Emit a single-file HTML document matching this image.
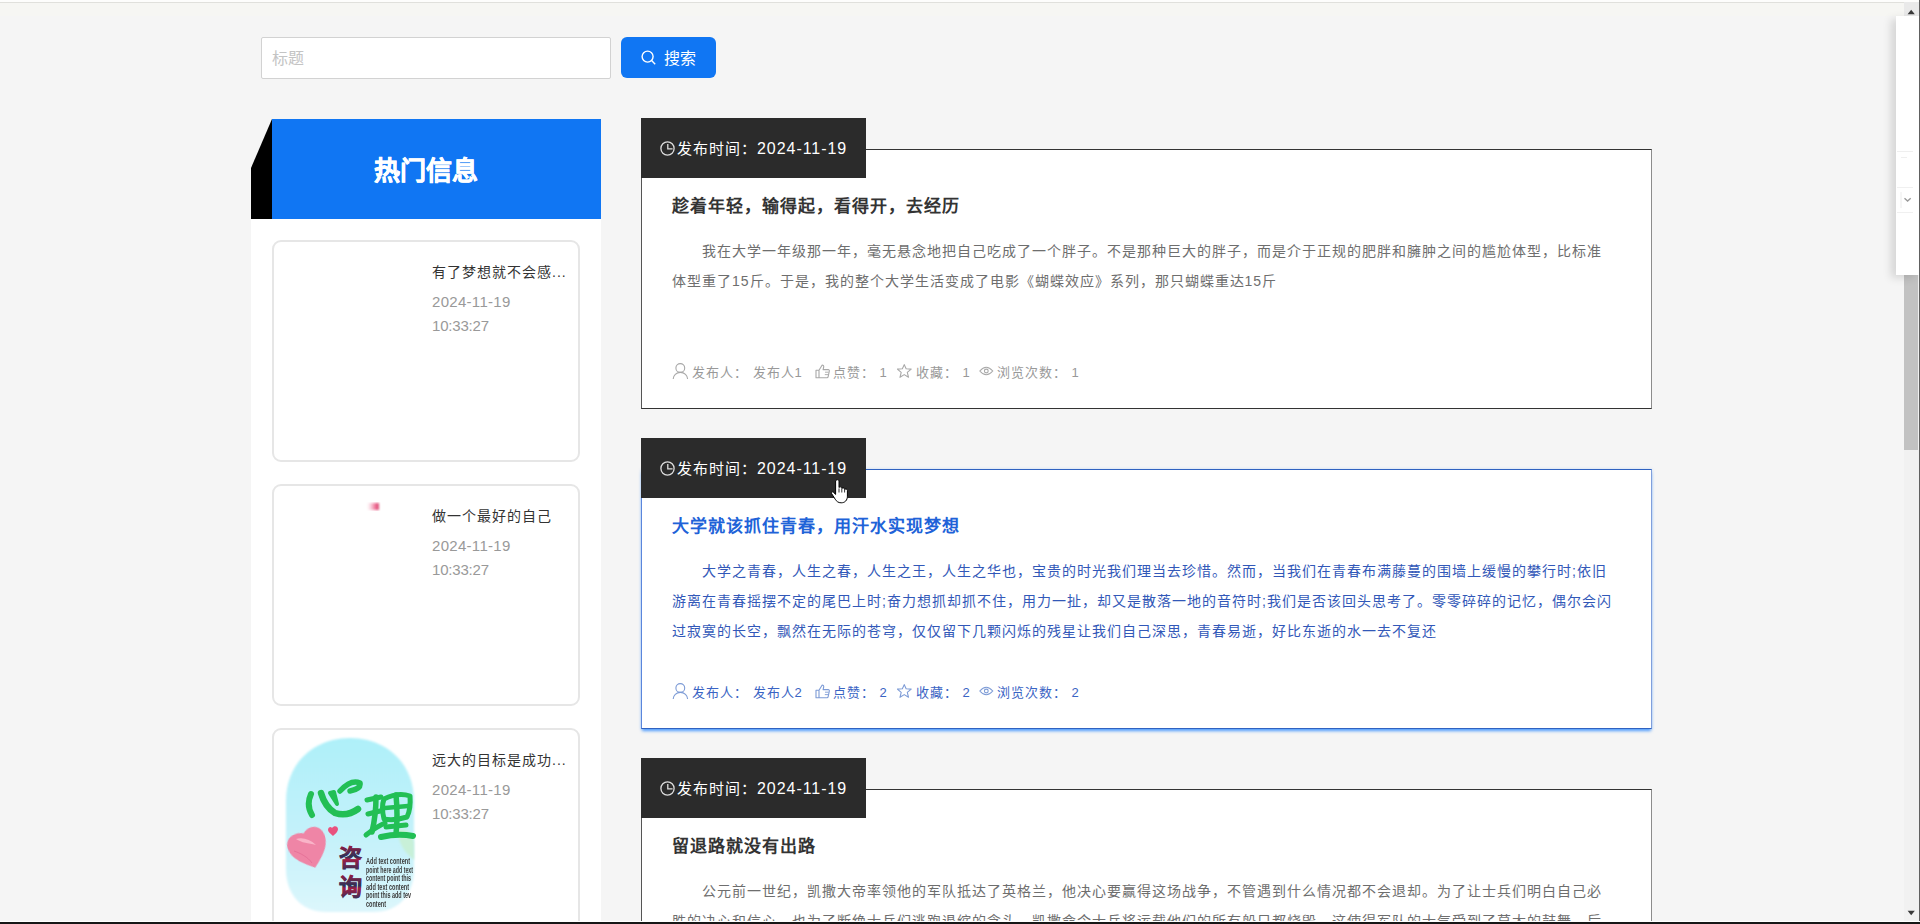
<!DOCTYPE html>
<html lang="zh-CN"><head><meta charset="utf-8">
<style>
*{margin:0;padding:0;box-sizing:border-box}
html,body{width:1920px;height:924px;overflow:hidden}
body{background:#f5f5f5;font-family:"Liberation Sans",sans-serif;position:relative;color:#333}
.abs{position:absolute}
#topbar{left:0;top:0;width:1920px;height:16px;background:#f6f6f3;border-top:2px solid #fdfdfc;box-shadow:inset 0 1px 0 #e0e0dc}
#search{left:261px;top:37px;width:350px;height:42px;background:#fff;border:1px solid #d2d2d2;border-radius:2px}
#search span{position:absolute;left:10px;top:7px;font-size:16px;color:#c4c4c4}
#btn{left:621px;top:37px;width:95px;height:41px;background:#1076f3;border-radius:6px;color:#fff;font-size:16px}
#btn svg{position:absolute;left:20px;top:13px}
#btn span{position:absolute;left:43px;top:8px}
#side{left:251px;top:218px;width:350px;height:706px;background:#fff}
#hotbg{left:272px;top:119px;width:329px;height:100px;background:#1076f3}
#hot{left:251px;top:121px;width:350px;height:100px;color:#fff;font-size:26px;font-weight:bold;text-align:center;line-height:100px;-webkit-text-stroke:0.5px #fff}
#hotk{left:251px;top:119px;width:22px;height:100px}
.sc{position:absolute;left:272px;width:308px;height:222px;border:2px solid #e6e6e6;border-radius:9px;background:#fff}
.sc .t{position:absolute;left:158px;top:18.5px;font-size:14px;letter-spacing:1px;color:#333;white-space:nowrap}
.sc .d{position:absolute;left:158px;top:48px;font-size:15px;color:#999;line-height:24px;letter-spacing:0.3px}
.card{position:absolute;left:641px;width:1011px;height:260px;background:#fff;border:1px solid #333;border-left-color:#555;border-right-color:#8c8c8c}
.tag{position:absolute;left:641px;width:225px;height:60px;background:#2b2b2b;color:#fff;font-size:16px}
.tag svg{position:absolute;left:19px;top:23px}
.tag span{position:absolute;left:36px;top:19px;white-space:nowrap;font-size:15px;letter-spacing:1px}
.tag b{font-weight:normal;font-size:16px;letter-spacing:0.95px}
.card .ti{position:absolute;left:30px;top:42px;font-size:17px;letter-spacing:1px;font-weight:bold;color:#333;white-space:nowrap}
.card .ct{position:absolute;left:30px;top:86px;font-size:14px;letter-spacing:1px;color:#6e6e6e;line-height:30px;white-space:nowrap}
.card.hov{border-color:#3062c0;border-right-color:#7f9fdc;border-left-color:#5a86dc;box-shadow:0 3px 3px -1px rgba(30,130,255,.75),0 0 3px rgba(30,130,255,.2)}
.card.hov .ti{color:#2062d8}
.card.hov .ct{color:#3258b8}
.mt{position:absolute;font-size:13px;letter-spacing:1px;color:#999;white-space:nowrap}
.mi{position:absolute}
.mt.hv{color:#3a64c4}
#sb{left:1904px;top:2px;width:15px;height:919px;background:#f1f1f1}
#sbup{left:1904px;top:2px;width:15px;height:14px;background:#e9e9e9}
#thumb{left:1904px;top:275px;width:14px;height:175px;background:#c2c2c2}
#pop{left:1896px;top:16px;width:23px;height:259px;background:#fff;box-shadow:-5px 3px 8px rgba(0,0,0,.13)}
#bot{left:0;top:921px;width:1920px;height:3px;background:#161616;border-top:1px solid #fff}
#redge{left:1919px;top:0;width:1px;height:921px;background:#606060}
</style></head><body>
<div id="topbar" class="abs"></div>
<div id="search" class="abs"><span>标题</span></div>
<div id="btn" class="abs"><svg width="16" height="16" viewBox="0 0 16 16"><circle cx="6.6" cy="6.6" r="5.5" fill="none" stroke="#fff" stroke-width="1.4"/><path d="M10.6 10.6l3.6 3.6" stroke="#fff" stroke-width="1.4"/></svg><span>搜索</span></div>
<div id="side" class="abs"></div>
<svg id="hotk" class="abs" width="22" height="100" viewBox="0 0 22 100"><path d="M21 0 L0 49 L0 100 L22 100 L22 0Z" fill="#000"/></svg>
<div id="hotbg" class="abs"></div><div id="hot" class="abs">热门信息</div>
<div class="sc" style="top:240px"><div class="t">有了梦想就不会感...</div><div class="d">2024-11-19<br><span style="letter-spacing:-0.2px">10:33:27</span></div></div>
<div class="sc" style="top:484px"><div class="t">做一个最好的自己</div><div class="d">2024-11-19<br><span style="letter-spacing:-0.2px">10:33:27</span></div></div>
<div class="sc" style="top:728px"><div class="t">远大的目标是成功...</div><div class="d">2024-11-19<br><span style="letter-spacing:-0.2px">10:33:27</span></div></div>
<svg class="abs" style="left:360px;top:500px" width="24" height="14" viewBox="0 0 24 14"><defs><linearGradient id="pk" x1="0" x2="1"><stop offset="0" stop-color="#f5b8cb" stop-opacity="0"/><stop offset="0.7" stop-color="#ee6f95"/><stop offset="1" stop-color="#d84a72"/></linearGradient><filter id="bl3"><feGaussianBlur stdDeviation="0.8"/></filter></defs><rect x="7" y="3" width="12" height="7" fill="url(#pk)" filter="url(#bl3)"/></svg>
<svg class="abs" style="left:280px;top:735px" width="140" height="186" viewBox="0 0 140 186">
<defs>
<linearGradient id="bgg" x1="0" y1="0" x2="0" y2="1"><stop offset="0" stop-color="#aef0f9"/><stop offset="0.6" stop-color="#c6f2fa"/><stop offset="1" stop-color="#dcf6fc"/></linearGradient>
<linearGradient id="zx" x1="0" y1="0" x2="0" y2="1"><stop offset="0" stop-color="#9a1a40"/><stop offset="0.45" stop-color="#2b3358"/><stop offset="0.55" stop-color="#a01d45"/><stop offset="1" stop-color="#2b3358"/></linearGradient>
<filter id="bl" x="-10%" y="-10%" width="120%" height="120%"><feGaussianBlur stdDeviation="1.2"/></filter>
<filter id="bl2"><feGaussianBlur stdDeviation="0.5"/></filter>
</defs>
<path d="M6 66 C6 28 34 3 70 3 C106 3 134 28 134 66 L134 134 C134 160 118 177 94 177 L46 177 C22 177 6 160 6 134Z" fill="url(#bgg)" filter="url(#bl)"/>
<path d="M118 95 C128 92 134 100 134 110 L134 125 C126 118 118 110 118 95Z" fill="#c8f0d8" filter="url(#bl)"/>
<g filter="url(#bl2)" fill="none" stroke="#22bf55" stroke-linecap="round" stroke-linejoin="round">
<path d="M31 59 Q26 70 32 80" stroke-width="6"/>
<path d="M41 58 Q45 72 55 78 Q67 82 78 74" stroke-width="6.5"/>
<path d="M50 58 L57 69 L54 57Z" stroke-width="4" fill="#22bf55"/>
<path d="M60 56 Q71 44 80 48 Q81 54 70 56" stroke-width="5.5"/>
<path d="M87 65 L101 62" stroke-width="5"/>
<path d="M88 79 L100 76" stroke-width="5"/>
<path d="M96 62 Q96 80 92 97" stroke-width="5.5"/>
<path d="M86 100 Q96 92 105 88" stroke-width="5"/>
<path d="M104 64 Q118 57 130 61 Q131 74 127 82 Q114 86 104 84 Q101 72 104 64Z" stroke-width="5"/>
<path d="M105 73 L128 71" stroke-width="4.5"/>
<path d="M116 60 Q118 80 116 99" stroke-width="5.5"/>
<path d="M106 92 L126 90" stroke-width="5"/>
<path d="M101 102 Q118 98 133 101" stroke-width="6"/>
</g>
<path d="M27 98 C35 90 46 94 47 105 C48 117 38 126 30 134 C21 128 9 121 8 109 C7 98 19 94 27 98Z" fill="#ef85a6" filter="url(#bl2)" transform="rotate(-14 27 112)"/>
<path d="M16 104 C22 102 30 104 36 110 C28 108 22 108 16 104Z" fill="#f9b4c8" filter="url(#bl2)"/><path d="M14 116 C20 118 28 122 32 128" stroke="#e06690" stroke-width="1" fill="none" opacity=".6"/>
<path d="M52 93 C54 90 58 91 58 94 C58 97 55 99 53 101 C51 99 48 97 48 95 C48 92 51 91 52 93Z" fill="#e9527e"/>
<text x="59" y="131" font-family="Liberation Sans" font-size="23" font-weight="bold" fill="url(#zx)" stroke="url(#zx)" stroke-width="0.7">咨</text>
<text x="59" y="160" font-family="Liberation Sans" font-size="23" font-weight="bold" fill="url(#zx)" stroke="url(#zx)" stroke-width="0.7">询</text>
<g font-family="Liberation Sans" font-size="8.2" font-weight="bold" fill="#3a3a3a" filter="url(#bl2)">
<text x="86" y="129" textLength="44" lengthAdjust="spacingAndGlyphs">Add text content</text>
<text x="86" y="137.5" textLength="47" lengthAdjust="spacingAndGlyphs">point here add text</text>
<text x="86" y="146" textLength="45" lengthAdjust="spacingAndGlyphs">content point this</text>
<text x="86" y="154.5" textLength="43" lengthAdjust="spacingAndGlyphs">add text content</text>
<text x="86" y="163" textLength="45" lengthAdjust="spacingAndGlyphs">point this add tev</text>
<text x="86" y="171.5" textLength="20" lengthAdjust="spacingAndGlyphs">content</text>
</g>
</svg>
<div class="card" style="top:149px"><div class="ti">趁着年轻，输得起，看得开，去经历</div><div class="ct">&#12288;&#12288;我在大学一年级那一年，毫无悬念地把自己吃成了一个胖子。不是那种巨大的胖子，而是介于正规的肥胖和臃肿之间的尴尬体型，比标准<br>体型重了15斤。于是，我的整个大学生活变成了电影《蝴蝶效应》系列，那只蝴蝶重达15斤</div></div>
<div class="tag" style="top:118px"><svg width="16" height="16" viewBox="0 0 16 16"><circle cx="7.5" cy="7.5" r="6.6" fill="none" stroke="#ddd" stroke-width="1.3"/><path d="M7.8 3V7.8H12.6" fill="none" stroke="#ddd" stroke-width="1.3"/></svg><span>发布时间：<b class="n">2024-11-19</b></span></div>
<svg class="mi" style="left:672px;top:363px" width="17" height="17" viewBox="0 0 17 17"><circle cx="8.3" cy="5" r="4.4" fill="none" stroke="#a8a8a8" stroke-width="1.1"/><path d="M1.2 16 A7.2 6.6 0 0 1 15.6 16" fill="none" stroke="#a8a8a8" stroke-width="1.1"/></svg><svg class="mi" style="left:815px;top:364px" width="16" height="15" viewBox="0 0 16 15"><path d="M1 6.2h3v7.6H1z M4 6.2 L7.2 1 C8.2 1 9 1.8 8.7 3 L8.1 5.6 H13.2 C14 5.6 14.5 6.3 14.3 7.1 L13.1 12.9 C13 13.5 12.6 13.8 12 13.8 H4" fill="none" stroke="#a8a8a8" stroke-width="1.1" stroke-linejoin="round"/><path d="M10 8.2h3.6M9.8 10.6h3.3" stroke="#a8a8a8" stroke-width="0.9"/></svg><svg class="mi" style="left:897px;top:364px" width="15" height="15" viewBox="0 0 15 15"><path d="M7.25 0.6 L9.13 4.81 L14.19 5.14 L10.29 8.39 L11.54 13.31 L7.25 10.60 L2.96 13.31 L4.21 8.39 L0.31 5.14 L5.37 4.81Z" fill="none" stroke="#a8a8a8" stroke-width="1.1" stroke-linejoin="round"/></svg><svg class="mi" style="left:979px;top:366px" width="15" height="10" viewBox="0 0 15 10"><path d="M0.8 5 Q7.2 -2.6 13.8 5 Q7.2 12.6 0.8 5Z" fill="none" stroke="#a8a8a8" stroke-width="1.1"/><circle cx="7.3" cy="5" r="1.9" fill="none" stroke="#a8a8a8" stroke-width="1.1"/></svg><span class="mt" style="left:692px;top:362px">发布人： 发布人1</span><span class="mt" style="left:833px;top:362px">点赞： 1</span><span class="mt" style="left:916px;top:362px">收藏： 1</span><span class="mt" style="left:997px;top:362px">浏览次数： 1</span>
<div class="card hov" style="top:469px"><div class="ti">大学就该抓住青春，用汗水实现梦想</div><div class="ct">&#12288;&#12288;大学之青春，人生之春，人生之王，人生之华也，宝贵的时光我们理当去珍惜。然而，当我们在青春布满藤蔓的围墙上缓慢的攀行时;依旧<br>游离在青春摇摆不定的尾巴上时;奋力想抓却抓不住，用力一扯，却又是散落一地的音符时;我们是否该回头思考了。零零碎碎的记忆，偶尔会闪<br>过寂寞的长空，飘然在无际的苍穹，仅仅留下几颗闪烁的残星让我们自己深思，青春易逝，好比东逝的水一去不复还</div></div>
<div class="tag" style="top:438px"><svg width="16" height="16" viewBox="0 0 16 16"><circle cx="7.5" cy="7.5" r="6.6" fill="none" stroke="#ddd" stroke-width="1.3"/><path d="M7.8 3V7.8H12.6" fill="none" stroke="#ddd" stroke-width="1.3"/></svg><span>发布时间：<b class="n">2024-11-19</b></span></div>
<svg class="mi" style="left:672px;top:683px" width="17" height="17" viewBox="0 0 17 17"><circle cx="8.3" cy="5" r="4.4" fill="none" stroke="#7d9bd6" stroke-width="1.1"/><path d="M1.2 16 A7.2 6.6 0 0 1 15.6 16" fill="none" stroke="#7d9bd6" stroke-width="1.1"/></svg><svg class="mi" style="left:815px;top:684px" width="16" height="15" viewBox="0 0 16 15"><path d="M1 6.2h3v7.6H1z M4 6.2 L7.2 1 C8.2 1 9 1.8 8.7 3 L8.1 5.6 H13.2 C14 5.6 14.5 6.3 14.3 7.1 L13.1 12.9 C13 13.5 12.6 13.8 12 13.8 H4" fill="none" stroke="#7d9bd6" stroke-width="1.1" stroke-linejoin="round"/><path d="M10 8.2h3.6M9.8 10.6h3.3" stroke="#7d9bd6" stroke-width="0.9"/></svg><svg class="mi" style="left:897px;top:684px" width="15" height="15" viewBox="0 0 15 15"><path d="M7.25 0.6 L9.13 4.81 L14.19 5.14 L10.29 8.39 L11.54 13.31 L7.25 10.60 L2.96 13.31 L4.21 8.39 L0.31 5.14 L5.37 4.81Z" fill="none" stroke="#7d9bd6" stroke-width="1.1" stroke-linejoin="round"/></svg><svg class="mi" style="left:979px;top:686px" width="15" height="10" viewBox="0 0 15 10"><path d="M0.8 5 Q7.2 -2.6 13.8 5 Q7.2 12.6 0.8 5Z" fill="none" stroke="#7d9bd6" stroke-width="1.1"/><circle cx="7.3" cy="5" r="1.9" fill="none" stroke="#7d9bd6" stroke-width="1.1"/></svg><span class="mt hv" style="left:692px;top:682px">发布人： 发布人2</span><span class="mt hv" style="left:833px;top:682px">点赞： 2</span><span class="mt hv" style="left:916px;top:682px">收藏： 2</span><span class="mt hv" style="left:997px;top:682px">浏览次数： 2</span>
<div class="card" style="top:789px"><div class="ti">留退路就没有出路</div><div class="ct">&#12288;&#12288;公元前一世纪，凯撒大帝率领他的军队抵达了英格兰，他决心要赢得这场战争，不管遇到什么情况都不会退却。为了让士兵们明白自己必<br>胜的决心和信心，也为了断绝士兵们逃跑退缩的念头，凯撒命令士兵将运载他们的所有船只都烧毁，这使得军队的士气受到了莫大的鼓舞，后</div></div>
<div class="tag" style="top:758px"><svg width="16" height="16" viewBox="0 0 16 16"><circle cx="7.5" cy="7.5" r="6.6" fill="none" stroke="#ddd" stroke-width="1.3"/><path d="M7.8 3V7.8H12.6" fill="none" stroke="#ddd" stroke-width="1.3"/></svg><span>发布时间：<b class="n">2024-11-19</b></span></div>
<div id="sb" class="abs"></div><div id="sbup" class="abs"></div>
<svg class="abs" style="left:1907px;top:9px" width="9" height="6" viewBox="0 0 9 6"><path d="M0.6 5.2 L4.2 0.8 L7.8 5.2Z" fill="#3a3a3a"/></svg>
<svg class="abs" style="left:1907px;top:910px" width="9" height="6" viewBox="0 0 9 6"><path d="M0.6 0.8 L4.2 5.2 L7.8 0.8Z" fill="#3a3a3a"/></svg>
<div id="thumb" class="abs"></div><div id="pop" class="abs"></div>
<svg class="abs" style="left:1900px;top:190px" width="14" height="20" viewBox="0 0 14 20"><path d="M1 2V18" stroke="#ececec" stroke-width="1"/><path d="M4.5 8.3 L7.6 11 L10.7 8.3" fill="none" stroke="#9a9a9a" stroke-width="1.4"/></svg>
<div class="abs" style="left:1897px;top:151px;width:16px;height:1px;background:#efefef"></div><div class="abs" style="left:1901px;top:157px;width:6px;height:1px;background:#efefef"></div><div class="abs" style="left:1897px;top:187px;width:16px;height:1px;background:#f0f0f0"></div><div class="abs" style="left:1897px;top:212px;width:16px;height:1px;background:#f0f0f0"></div>
<div id="bot" class="abs"></div><div id="redge" class="abs"></div>
<svg class="abs" style="left:830px;top:478px" width="21" height="27" viewBox="0 0 21 27"><path d="M6.6 2 C7.6 1.4 9 1.9 9 3 L9 9.6 C9.4 8.6 11.6 8.6 11.8 9.8 L11.8 10.6 C12.3 9.6 14.4 9.7 14.6 10.9 L14.6 11.6 C15.1 10.7 17.4 10.9 17.4 12.3 L17.4 18.2 C17.4 22.2 15 24.8 11.2 24.8 C8.2 24.8 6.6 23.4 5.2 21.2 L1.6 15.6 C1 14.6 2.1 13.4 3.2 14 L5.6 16.4 L5.6 3 C5.6 2.5 6 2.1 6.6 2Z" fill="#fff" stroke="#000" stroke-width="1"/><path d="M9 10.4V14.5M11.8 11V14.5M14.6 11.8V14.5" stroke="#000" stroke-width="0.8"/></svg>
</body></html>
